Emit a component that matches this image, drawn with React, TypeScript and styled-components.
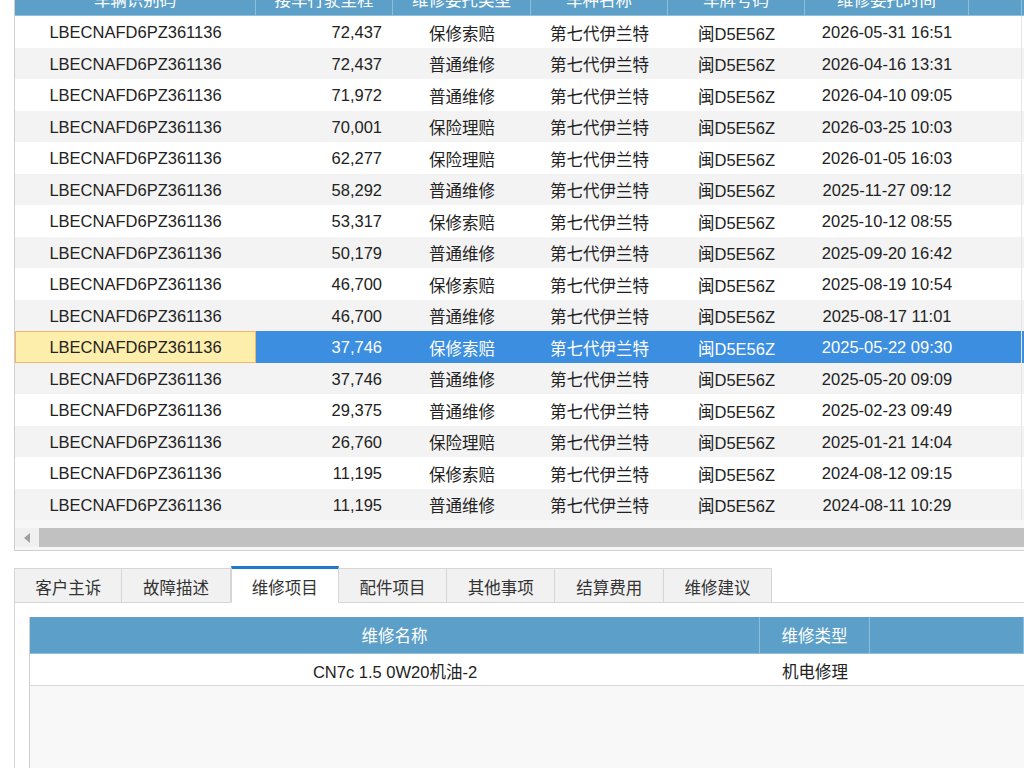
import styled, { createGlobalStyle } from "styled-components";

const GlobalStyle = createGlobalStyle`
  html, body { margin: 0; padding: 0; background: #fff; }
  body {
    width: 1024px;
    height: 768px;
    overflow: hidden;
    font-family: "Liberation Sans", "Noto Sans CJK SC", sans-serif;
    color: #222;
  }
`;

type Record = { mileage: string; kind: string; time: string };

const VIN = "LBECNAFD6PZ361136";
const MODEL = "第七代伊兰特";
const PLATE = "闽D5E56Z";

const records: Record[] = [
  { mileage: "72,437", kind: "保修索赔", time: "2026-05-31 16:51" },
  { mileage: "72,437", kind: "普通维修", time: "2026-04-16 13:31" },
  { mileage: "71,972", kind: "普通维修", time: "2026-04-10 09:05" },
  { mileage: "70,001", kind: "保险理赔", time: "2026-03-25 10:03" },
  { mileage: "62,277", kind: "保险理赔", time: "2026-01-05 16:03" },
  { mileage: "58,292", kind: "普通维修", time: "2025-11-27 09:12" },
  { mileage: "53,317", kind: "保修索赔", time: "2025-10-12 08:55" },
  { mileage: "50,179", kind: "普通维修", time: "2025-09-20 16:42" },
  { mileage: "46,700", kind: "保修索赔", time: "2025-08-19 10:54" },
  { mileage: "46,700", kind: "普通维修", time: "2025-08-17 11:01" },
  { mileage: "37,746", kind: "保修索赔", time: "2025-05-22 09:30" },
  { mileage: "37,746", kind: "普通维修", time: "2025-05-20 09:09" },
  { mileage: "29,375", kind: "普通维修", time: "2025-02-23 09:49" },
  { mileage: "26,760", kind: "保险理赔", time: "2025-01-21 14:04" },
  { mileage: "11,195", kind: "保修索赔", time: "2024-08-12 09:15" },
  { mileage: "11,195", kind: "普通维修", time: "2024-08-11 10:29" },
];

const SELECTED = 10;

const headers = ["车辆识别码", "接车行驶里程", "维修委托类型", "车种名称", "车牌号码", "维修委托时间", ""];
const tabs = ["客户主诉", "故障描述", "维修项目", "配件项目", "其他事项", "结算费用", "维修建议"];
const ACTIVE_TAB = 2;

const COLS = "241px 137px 138px 137px 137px 164px 53px 3px";

export default function App() {
  return (
    <Page>
      <GlobalStyle />
      <Frame>
        <HeadRow>
          {headers.map((h, i) => (
            <HeadCell key={i}>{h}</HeadCell>
          ))}
        </HeadRow>
        {records.map((r, i) => {
          const sel = i === SELECTED;
          return (
            <Row key={i} $odd={i % 2 === 1} $selected={sel}>
              <FocusCell $focus={sel}>{VIN}</FocusCell>
              <Cell $align="right">{r.mileage}</Cell>
              <Cell>{r.kind}</Cell>
              <Cell>{MODEL}</Cell>
              <Cell>{PLATE}</Cell>
              <Cell>{r.time}</Cell>
              <EndCell />
            </Row>
          );
        })}
        <ScrollArea>
          <ScrollBar>
            <ArrowBtn>
              <svg width="6" height="10" viewBox="0 0 6 10">
                <path d="M6 0 L0 5 L6 10 Z" fill="#a0a0a0" />
              </svg>
            </ArrowBtn>
            <Thumb />
          </ScrollBar>
        </ScrollArea>
      </Frame>

      <TabStrip>
        {tabs.map((t, i) => (
          <Tab key={t} $active={i === ACTIVE_TAB}>
            {t}
          </Tab>
        ))}
        <TabFill />
      </TabStrip>

      <Panel>
        <SubTable>
          <SubHead>
            <SubHeadCell>维修名称</SubHeadCell>
            <SubHeadCell>维修类型</SubHeadCell>
            <SubHeadCell />
          </SubHead>
          <SubRow>
            <SubCell>CN7c 1.5 0W20机油-2</SubCell>
            <SubCell>机电修理</SubCell>
            <SubCell />
          </SubRow>
          <SubEmpty />
        </SubTable>
      </Panel>
    </Page>
  );
}

const Page = styled.div`
  display: flex;
  flex-direction: column;
  padding-left: 14px;
  margin-top: -17px;
  height: 785px;
  overflow: hidden;
`;

const Frame = styled.section`
  display: flex;
  flex-direction: column;
  border-left: 1px solid #cfcfcf;
  border-bottom: 1px solid #cfcfcf;
  background: #fff;
`;

const HeadRow = styled.div`
  display: grid;
  grid-template-columns: ${COLS};
  height: 32px;
  background: #5c9fc8;
  border-bottom: 1px solid #8fc0dc;
`;

const HeadCell = styled.div`
  display: flex;
  align-items: center;
  justify-content: center;
  border-right: 1px solid #8dbfdc;
  font-size: 16.5px;
  color: #fff;
  white-space: nowrap;
  overflow: hidden;
`;

const Row = styled.div<{ $odd: boolean; $selected: boolean }>`
  display: grid;
  grid-template-columns: ${COLS};
  height: 31.5px;
  background: ${(p) => (p.$selected ? "#3b8ee0" : p.$odd ? "#f3f3f3" : "#fff")};
  color: ${(p) => (p.$selected ? "#fff" : "#222")};
`;

const Cell = styled.div<{ $align?: "right" | "center" }>`
  display: flex;
  align-items: center;
  justify-content: ${(p) => (p.$align === "right" ? "flex-end" : "center")};
  padding-right: ${(p) => (p.$align === "right" ? "11px" : "0")};
  padding-top: 2px;
  font-size: 16.5px;
  white-space: nowrap;
`;

const FocusCell = styled(Cell)<{ $focus: boolean }>`
  background: ${(p) => (p.$focus ? "#fdeeab" : "transparent")};
  color: #222;
  box-shadow: ${(p) => (p.$focus ? "inset 0 0 0 1px #f2b56a" : "none")};
`;

const EndCell = styled.div`
  border-right: 1px solid #e6e6e6;
`;

const ScrollArea = styled.div`
  height: 30px;
  padding-top: 8px;
  box-sizing: border-box;
  background: #f7f7f7;
`;

const ScrollBar = styled.div`
  display: flex;
  height: 19px;
  background: #efefef;
`;

const ArrowBtn = styled.div`
  width: 24px;
  display: flex;
  align-items: center;
  justify-content: center;
  background: #f0f0f0;
`;

const Thumb = styled.div`
  flex: 1;
  background: #c1c1c1;
`;

const TabStrip = styled.nav`
  display: flex;
  align-items: flex-end;
  margin-top: 15px;
  height: 37px;
  flex-shrink: 0;
`;

const Tab = styled.div<{ $active: boolean }>`
  width: 108.3px;
  height: ${(p) => (p.$active ? "37px" : "35px")};
  box-sizing: border-box;
  display: flex;
  align-items: center;
  justify-content: center;
  font-size: 16.5px;
  color: #333;
  background: ${(p) => (p.$active ? "#fff" : "#f1f1f1")};
  border: 1px solid #d6d6d6;
  border-left: ${(p) => (p.$active ? "1px solid #d6d6d6" : "none")};
  border-top: ${(p) => (p.$active ? "3px solid #1f78c8" : "1px solid #d6d6d6")};
  border-bottom: ${(p) => (p.$active ? "1px solid #fff" : "1px solid #d6d6d6")};
  padding-top: 2px;
  &:first-child {
    border-left: 1px solid #d6d6d6;
  }
`;

const TabFill = styled.div`
  flex: 1;
  align-self: stretch;
  border-bottom: 1px solid #d6d6d6;
`;

const Panel = styled.section`
  flex: 1;
  display: flex;
  flex-direction: column;
  padding: 14px 0 0 14px;
  border-left: 1px solid #d6d6d6;
  min-height: 0;
`;

const SubTable = styled.div`
  display: flex;
  flex-direction: column;
  flex: 1;
  border-left: 1px solid #cfcfcf;
`;

const SUB_COLS = "730px 110px 1fr";

const SubHead = styled.div`
  display: grid;
  grid-template-columns: ${SUB_COLS};
  height: 36px;
  background: #5c9fc8;
  border-bottom: 1px solid #8fc0dc;
`;

const SubHeadCell = styled.div`
  display: flex;
  align-items: center;
  justify-content: center;
  border-right: 1px solid #8dbfdc;
  font-size: 16.5px;
  color: #fff;
`;

const SubRow = styled.div`
  display: grid;
  grid-template-columns: ${SUB_COLS};
  height: 31px;
  background: #fff;
  border-bottom: 1px solid #d8d8d8;
`;

const SubCell = styled.div`
  display: flex;
  align-items: center;
  justify-content: center;
  padding-top: 2px;
  font-size: 16.5px;
  color: #222;
`;

const SubEmpty = styled.div`
  flex: 1;
  background: #f8f8f8;
`;
